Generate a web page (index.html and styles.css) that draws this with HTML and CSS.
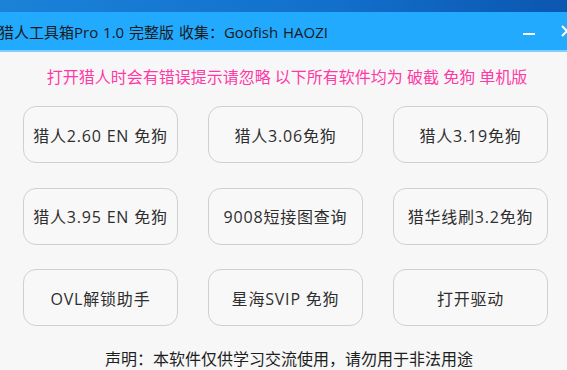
FILE: index.html
```html
<!DOCTYPE html>
<html lang="zh-CN">
<head>
<meta charset="utf-8">
<title>猎人工具箱</title>
<link rel="stylesheet" href="styles.css">
</head>
<body>
<div class="desk"></div>
<div class="window">
  <div class="titlebar">
    <div class="title">猎人工具箱Pro 1.0 完整版 收集：Goofish HAOZI</div>
    <div class="controls">
      <span class="min"></span>
      <svg class="close" width="12" height="12" viewBox="0 0 12 12"><path d="M1 1L11 11M11 1L1 11" stroke="#fff" stroke-width="2"/></svg>
    </div>
  </div>
  <div class="content">
    <div class="notice">打开猎人时会有错误提示请忽略 以下所有软件均为 破截 免狗 单机版</div>
    <div class="grid">
      <button class="btn">猎人2.60 EN 免狗</button>
      <button class="btn">猎人3.06免狗</button>
      <button class="btn">猎人3.19免狗</button>
      <button class="btn">猎人3.95 EN 免狗</button>
      <button class="btn">9008短接图查询</button>
      <button class="btn">猎华线刷3.2免狗</button>
      <button class="btn">OVL解锁助手</button>
      <button class="btn">星海SVIP 免狗</button>
      <button class="btn">打开驱动</button>
    </div>
    <div class="footer">声明：本软件仅供学习交流使用，请勿用于非法用途</div>
  </div>
</div>
</body>
</html>
```
FILE: styles.css
```css
html, body {
  margin: 0;
  padding: 0;
  width: 567px;
  height: 370px;
  overflow: hidden;
  background: #f7f7f7;
  font-family: "Open Sans", "Noto Sans CJK SC", sans-serif;
}
.desk {
  height: 12px;
  background: linear-gradient(90deg, #1b82d8 0%, #126fca 60%, #0b56b0 100%);
}
.titlebar {
  height: 38px;
  background: #22aaff;
  border-bottom: 2px solid #7fcfff;
  display: flex;
  align-items: center;
  justify-content: space-between;
}
.title {
  font-size: 15px;
  color: #1a1a1a;
  margin-left: -1px;
  word-spacing: 1px;
}
.controls {
  display: flex;
  align-items: center;
  gap: 26px;
  margin-right: -6px;
}
.min {
  width: 12px;
  height: 2px;
  background: #fff;
  margin-top: 6px;
}
.content {
  background: #f7f7f7;
}
.notice {
  color: #ff3aa6;
  font-size: 16px;
  text-align: center;
  padding-top: 12px;
  height: 25px;
  padding-left: 7px;
}
.grid {
  display: grid;
  grid-template-columns: repeat(3, 155px);
  grid-auto-rows: 57px;
  column-gap: 30px;
  row-gap: 24.5px;
  padding: 17px 0 0 23px;
}
.btn {
  font-family: "Open Sans", "Noto Sans CJK SC", sans-serif;
  font-size: 16px;
  letter-spacing: 0.8px;
  color: #2e2e2e;
  background: #f8f8f8;
  border: 1px solid #d0d0d0;
  border-radius: 13px;
  padding: 0;
  white-space: nowrap;
}
.footer {
  text-align: center;
  font-size: 16px;
  color: #1e1e1e;
  padding-top: 20px;
  padding-left: 11px;
}
```
